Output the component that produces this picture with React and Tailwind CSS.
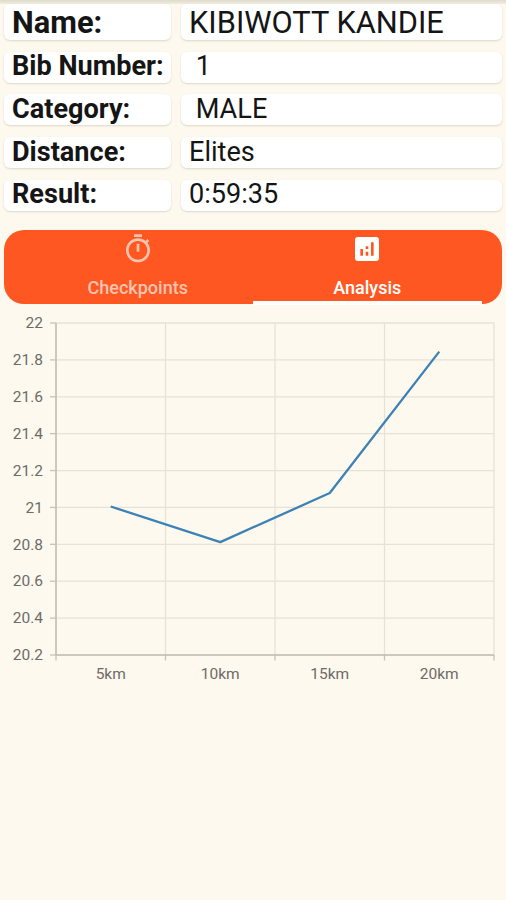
const details = [
  { label: "Name:", value: "KIBIWOTT KANDIE", row: "h-[36px] mb-[12px] text-[30.8px]", cell: "pt-[3px]" },
  { label: "Bib Number:", value: " 1", row: "h-[31px] mb-[11px] text-[27.1px]", cell: "pb-[3px]" },
  { label: "Category:", value: " MALE", row: "h-[31px] mb-[12px] text-[27.1px]", cell: "pb-px" },
  { label: "Distance:", value: "Elites", row: "h-[31px] mb-[12px] text-[27.1px]", cell: "pb-px" },
  { label: "Result:", value: "0:59:35", row: "h-[31px] mb-[19px] text-[27.1px]", cell: "pb-[3px]" },
];

const speeds = [
  { km: "5km", speed: 21.005 },
  { km: "10km", speed: 20.812 },
  { km: "15km", speed: 21.078 },
  { km: "20km", speed: 21.845 },
];

const ticks = ["22", "21.8", "21.6", "21.4", "21.2", "21", "20.8", "20.6", "20.4", "20.2"];

// Plot area of the chart, in svg units
const LEFT = 56;
const RIGHT = 494;
const TOP = 18;
const BOTTOM = 350;
const STEP = (RIGHT - LEFT) / 4;

const yOf = (v) => BOTTOM - ((v - 20.2) / 1.8) * (BOTTOM - TOP);

function DetailRow({ item }) {
  return (
    <div className={`flex gap-[10px] ${item.row}`}>
      <div className={`flex w-[167px] items-center rounded-[6px] bg-white pl-2 font-bold whitespace-pre shadow-[0_1px_2px_rgba(90,80,50,0.2)] ${item.cell}`}>
        {item.label}
      </div>
      <div className={`flex flex-1 items-center rounded-[6px] bg-white pl-2 whitespace-pre shadow-[0_1px_2px_rgba(90,80,50,0.2)] ${item.cell}`}>
        {item.value}
      </div>
    </div>
  );
}

function TimerIcon() {
  return (
    <svg viewBox="0 0 24 24" className="size-8" fill="currentColor">
      <path d="M15 1H9v2h6V1zm-4 13h2V8h-2v6zm8.03-6.61l1.42-1.42c-.43-.51-.9-.99-1.41-1.41l-1.42 1.42C16.07 4.74 14.12 4 12 4c-4.97 0-9 4.03-9 9s4.02 9 9 9 9-4.03 9-9c0-2.12-.74-4.07-1.97-5.61zM12 20c-3.87 0-7-3.13-7-7s3.13-7 7-7 7 3.13 7 7-3.13 7-7 7z" />
    </svg>
  );
}

function AnalyticsIcon() {
  return (
    <svg viewBox="0 0 24 24" className="size-8" fill="currentColor">
      <path d="M19 3H5c-1.1 0-2 .9-2 2v14c0 1.1.9 2 2 2h14c1.1 0 2-.9 2-2V5c0-1.1-.9-2-2-2zM9 17H7v-5h2v5zm4 0h-2v-3h2v3zm0-5h-2v-2h2v2zm4 5h-2V7h2v10z" />
    </svg>
  );
}

function SpeedChart() {
  const points = speeds
    .map((s, i) => `${LEFT + STEP * (i + 0.5)},${yOf(s.speed)}`)
    .join(" ");

  return (
    <svg viewBox="0 0 506 390" className="block h-[390px] w-[506px]">
      {/* Horizontal grid */}
      {ticks.map((t) => (
        <g key={t}>
          <line x1={LEFT} x2={RIGHT} y1={yOf(+t)} y2={yOf(+t)} stroke="#e6e2d9" strokeWidth="1.3" />
          <line x1={LEFT - 6} x2={LEFT} y1={yOf(+t)} y2={yOf(+t)} stroke="#c6c3ba" strokeWidth="1.3" />
          <text x="43" y={yOf(+t) + 5.2} textAnchor="end" fontSize="15.5" fill="#6d6b67">{t}</text>
        </g>
      ))}

      {/* Vertical grid */}
      {[0, 1, 2, 3, 4].map((i) => (
        <g key={i}>
          <line x1={LEFT + STEP * i} x2={LEFT + STEP * i} y1={TOP} y2={BOTTOM} stroke="#e6e2d9" strokeWidth="1.3" />
          <line x1={LEFT + STEP * i} x2={LEFT + STEP * i} y1={BOTTOM} y2={BOTTOM + 5.5} stroke="#c6c3ba" strokeWidth="1.3" />
        </g>
      ))}

      <path d={`M${LEFT} ${TOP}V${BOTTOM}H${RIGHT}`} fill="none" stroke="#c0bdb5" strokeWidth="1.5" />

      {speeds.map((s, i) => (
        <text key={s.km} x={LEFT + STEP * (i + 0.5)} y="374" textAnchor="middle" fontSize="15.5" fill="#6d6b67">
          {s.km}
        </text>
      ))}

      <polyline points={points} fill="none" stroke="#3c82b5" strokeWidth="2.3" strokeLinejoin="round" />
    </svg>
  );
}

export default function App() {
  return (
    <div className="h-[900px] w-[506px] overflow-hidden bg-[#fef9ee] font-[Roboto,sans-serif] text-[#151515]">
      <div className="h-1 bg-gradient-to-b from-[#dedbce] to-[#f1eddf]" />

      <div className="px-1">
        {details.map((item) => (
          <DetailRow key={item.label} item={item} />
        ))}

        {/* Tabs */}
        <div className="relative mb-px flex h-[74px] w-[498px] rounded-[20px] bg-[#ff5722] pr-[20px] pl-[19px] text-[18px] font-medium">
          <div className="flex flex-1 flex-col items-center pt-[3px] text-[#ffc4b0]">
            <TimerIcon />
            <span className="mt-[9px]">Checkpoints</span>
          </div>
          <div className="flex flex-1 flex-col items-center pt-[3px] text-white">
            <AnalyticsIcon />
            <span className="mt-[9px]">Analysis</span>
          </div>
          <div className="absolute -bottom-px left-[249px] h-[4px] w-[229px] bg-white" />
        </div>
      </div>

      <SpeedChart />
    </div>
  );
}
